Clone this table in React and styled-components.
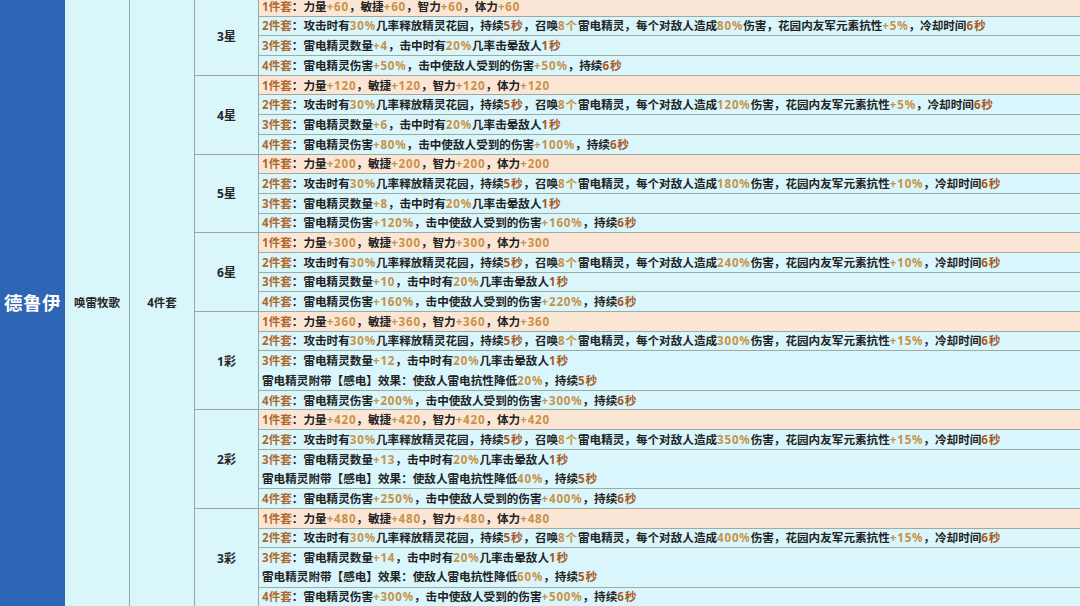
import React from "react";
import styled, { createGlobalStyle } from "styled-components";

const GlobalStyle = createGlobalStyle`
  html, body {
    margin: 0;
    padding: 0;
    background: #d9f6fb;
    overflow: hidden;
  }
  body {
    font-family: "Noto Sans", "Noto Sans CJK SC", sans-serif;
  }
`;

const tiers = [
  { label: "3星", base: 60, dmg: 80, res: 5, count: 4, spirit: 50, taken: 50 },
  { label: "4星", base: 120, dmg: 120, res: 5, count: 6, spirit: 80, taken: 100 },
  { label: "5星", base: 200, dmg: 180, res: 10, count: 8, spirit: 120, taken: 160 },
  { label: "6星", base: 300, dmg: 240, res: 10, count: 10, spirit: 160, taken: 220 },
  { label: "1彩", base: 360, dmg: 300, res: 15, count: 12, spirit: 200, taken: 300, shock: 20 },
  { label: "2彩", base: 420, dmg: 350, res: 15, count: 13, spirit: 250, taken: 400, shock: 40 },
  { label: "3彩", base: 480, dmg: 400, res: 15, count: 14, spirit: 300, taken: 500, shock: 60 },
];

const buildLines = (t) => {
  const lines = [
    { peach: true, text: [`1件套：力量+${t.base}，敏捷+${t.base}，智力+${t.base}，体力+${t.base}`] },
    {
      text: [
        `2件套：攻击时有30%几率释放精灵花园，持续5秒，召唤8个雷电精灵，每个对敌人造成${t.dmg}%伤害，花园内友军元素抗性+${t.res}%，冷却时间6秒`,
      ],
    },
    { text: [`3件套：雷电精灵数量+${t.count}，击中时有20%几率击晕敌人1秒`] },
    { text: [`4件套：雷电精灵伤害+${t.spirit}%，击中使敌人受到的伤害+${t.taken}%，持续6秒`] },
  ];
  if (t.shock) {
    lines[2].text.push(`雷电精灵附带【感电】效果：使敌人雷电抗性降低${t.shock}%，持续5秒`);
  }
  return lines;
};

// split one line into plain text and coloured bits
const renderText = (str) => {
  const out = [];
  let rest = str;
  const head = rest.match(/^\d件套/);
  if (head) {
    out.push(<Prefix key="p">{head[0]}</Prefix>);
    rest = rest.slice(head[0].length);
  }
  const re = /(\d+秒)|(\+?\d+%?个?)/g;
  let last = 0;
  let m;
  let i = 0;
  while ((m = re.exec(rest))) {
    if (m.index > last) out.push(rest.slice(last, m.index));
    out.push(
      <Value key={i++} $dark={!!m[1]}>
        {m[0]}
      </Value>
    );
    last = m.index + m[0].length;
  }
  if (last < rest.length) out.push(rest.slice(last));
  return out;
};

const App = () => {
  return (
    <>
      <GlobalStyle />
      <Table>
        <HeroCell>德鲁伊</HeroCell>
        <LabelCell>唤雷牧歌</LabelCell>
        <LabelCell>4件套</LabelCell>
        <Blocks>
          {tiers.map((t) => {
            const lines = buildLines(t);
            return (
              <Block key={t.label}>
                <TierCell>{t.label}</TierCell>
                <Lines>
                  {lines.map((l, idx) => (
                    <Line key={idx} $peach={l.peach} $rows={l.text.length}>
                      {l.text.map((s, j) => (
                        <TextRow key={j}>{renderText(s)}</TextRow>
                      ))}
                    </Line>
                  ))}
                </Lines>
              </Block>
            );
          })}
        </Blocks>
      </Table>
    </>
  );
};

export default App;

const ROW = 19.7;

const Table = styled.div`
  display: flex;
  width: 1080px;
  margin-top: -3px;
  background: #d9f6fb;
`;

const HeroCell = styled.div`
  width: 65px;
  flex-shrink: 0;
  background: #2e65b4;
  color: #fff;
  font-size: 18.5px;
  font-weight: 700;
  display: flex;
  align-items: center;
  justify-content: center;
  letter-spacing: 0.5px;
`;

const LabelCell = styled.div`
  width: 64px;
  flex-shrink: 0;
  border-right: 1px solid #97a6a6;
  background: #d9f6fb;
  color: #262626;
  font-size: 11.5px;
  font-weight: 700;
  display: flex;
  align-items: center;
  justify-content: center;
`;

const Blocks = styled.div`
  flex: 1;
  display: flex;
  flex-direction: column;
`;

const Block = styled.div`
  display: flex;
`;

const TierCell = styled.div`
  width: 63px;
  flex-shrink: 0;
  border-right: 1px solid #97a6a6;
  border-bottom: 1px solid #97a6a6;
  color: #262626;
  font-size: 12px;
  font-weight: 700;
  display: flex;
  align-items: center;
  justify-content: center;
`;

const Lines = styled.div`
  flex: 1;
  display: flex;
  flex-direction: column;
`;

const Line = styled.div`
  box-sizing: border-box;
  height: ${(p) => p.$rows * ROW}px;
  padding-left: 3px;
  border-bottom: 1px solid #a2aa9e;
  background: ${(p) => (p.$peach ? "#fbe6d6" : "#d8f6fb")};
  display: flex;
  flex-direction: column;
  justify-content: center;
`;

const TextRow = styled.div`
  height: ${ROW - 0.5}px;
  line-height: ${ROW - 0.5}px;
  font-size: 11.6px;
  font-weight: 700;
  color: #232323;
  white-space: nowrap;
`;

const Prefix = styled.span`
  color: #b0682c;
`;

const Value = styled.span`
  letter-spacing: 0.8px;
  color: ${(p) => (p.$dark ? "#a85a26" : "#c89246")};
`;
